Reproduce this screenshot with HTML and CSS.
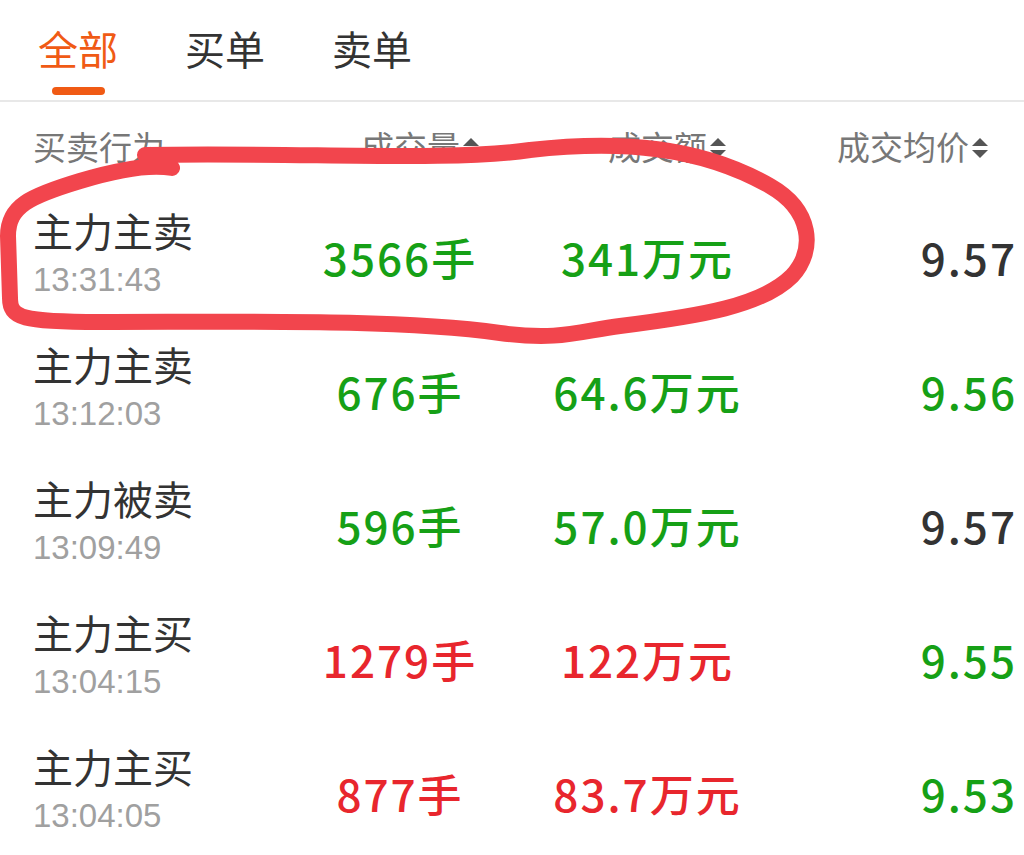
FILE: index.html
```html
<!DOCTYPE html>
<html lang="zh-CN">
<head>
  <meta charset="UTF-8" />
  <meta name="viewport" content="width=device-width, initial-scale=1.0" />
  <title>成交明细</title>
  <link rel="stylesheet" href="styles.css">
</head>
<body>
  <nav class="tabs">
    <div class="tab active">全部</div>
    <div class="tab">买单</div>
    <div class="tab">卖单</div>
  </nav>

  <div class="table">
    <div class="row head">
      <div class="cell name">买卖行为</div>
      <div class="cell vol">成交量<svg class="sort" viewBox="0 0 18 26"><path d="M9 3 L17 11 L1 11 Z" fill="#555"/></svg></div>
      <div class="cell amt">成交额<svg class="sort" viewBox="0 0 18 26"><path d="M9 3 L17 11 L1 11 Z M1 15 L17 15 L9 23 Z" fill="#555"/></svg></div>
      <div class="cell price">成交均价<svg class="sort" viewBox="0 0 18 26"><path d="M9 3 L17 11 L1 11 Z M1 15 L17 15 L9 23 Z" fill="#555"/></svg></div>
    </div>

    <div class="row">
      <div class="cell name"><div class="act">主力主卖</div><div class="time">13:31:43</div></div>
      <div class="cell num vol down">3566手</div>
      <div class="cell num amt down">341万元</div>
      <div class="cell num price">9.57</div>
    </div>
    <div class="row">
      <div class="cell name"><div class="act">主力主卖</div><div class="time">13:12:03</div></div>
      <div class="cell num vol down">676手</div>
      <div class="cell num amt down">64.6万元</div>
      <div class="cell num price down">9.56</div>
    </div>
    <div class="row">
      <div class="cell name"><div class="act">主力被卖</div><div class="time">13:09:49</div></div>
      <div class="cell num vol down">596手</div>
      <div class="cell num amt down">57.0万元</div>
      <div class="cell num price">9.57</div>
    </div>
    <div class="row">
      <div class="cell name"><div class="act">主力主买</div><div class="time">13:04:15</div></div>
      <div class="cell num vol up">1279手</div>
      <div class="cell num amt up">122万元</div>
      <div class="cell num price down">9.55</div>
    </div>
    <div class="row">
      <div class="cell name"><div class="act">主力主买</div><div class="time">13:04:05</div></div>
      <div class="cell num vol up">877手</div>
      <div class="cell num amt up">83.7万元</div>
      <div class="cell num price down">9.53</div>
    </div>
  </div>

  <!-- hand-drawn highlight over the first row -->
  <svg class="scribble" viewBox="0 0 1024 855">
    <path d="M145 155 C300 152, 450 162, 530 150 C620 140, 700 146, 770 186 C812 210, 816 250, 792 276 C762 306, 700 316, 620 326 C580 331, 560 341, 500 333 C400 319, 250 322, 100 322 C22 322, 10 318, 10 298 L8 236 C8 206, 30 196, 80 181 C120 169, 150 164, 172 168" />
  </svg>
</body>
</html>
```

FILE: styles.css
```css
body {
  margin: 0;
  background: #fff;
  font-family: "Noto Sans CJK SC", sans-serif;
  color: #333;
  position: relative;
  overflow: hidden;
}

.tabs {
  display: flex;
  gap: 67px;
  padding: 0 0 0 38px;
  height: 100px;
  border-bottom: 2px solid #e8e8e8;
}

.tab {
  font-size: 40px;
  line-height: 96px;
  color: #333;
  position: relative;
}

.tab.active {
  color: #f05a14;
}

.tab.active::after {
  content: "";
  position: absolute;
  left: 14px;
  bottom: 5px;
  width: 53px;
  height: 8px;
  border-radius: 4px;
  background: #f05a14;
}

.table {
  padding: 0 7px 0 33px;
}

.row {
  display: flex;
  align-items: center;
  height: 134px;
}

.row.head {
  height: 88px;
  font-size: 33px;
  color: #777;
}

.cell.name {
  width: 247px;
}

.cell.vol {
  width: 240px;
  text-align: center;
}

.cell.amt {
  width: 255px;
  text-align: center;
}

.cell.price {
  flex: 1;
  text-align: right;
}

.head .cell.vol {
  text-align: right;
  padding-right: 40px;
  box-sizing: border-box;
}

.head .cell.amt {
  text-align: right;
  padding-right: 48px;
  box-sizing: border-box;
}

.head .cell.price {
  padding-right: 28px;
}

.sort {
  width: 18px;
  height: 26px;
  margin-left: 2px;
  vertical-align: -1px;
}

.num {
  font-size: 44px;
  font-weight: 500;
  letter-spacing: 2px;
  color: #333;
}

.num.down {
  color: #16a016;
}

.num.up {
  color: #e8262d;
}

.act {
  font-size: 40px;
  line-height: 46px;
  color: #333;
}

.time {
  font-family: "Liberation Sans", sans-serif;
  font-size: 33px;
  line-height: 54px;
  color: #a0a0a0;
}

.scribble {
  position: absolute;
  top: 0;
  left: 0;
  width: 1024px;
  height: 855px;
  pointer-events: none;
}

.scribble path {
  fill: none;
  stroke: #f2454d;
  stroke-width: 16;
  stroke-linecap: round;
  stroke-linejoin: round;
}
```
